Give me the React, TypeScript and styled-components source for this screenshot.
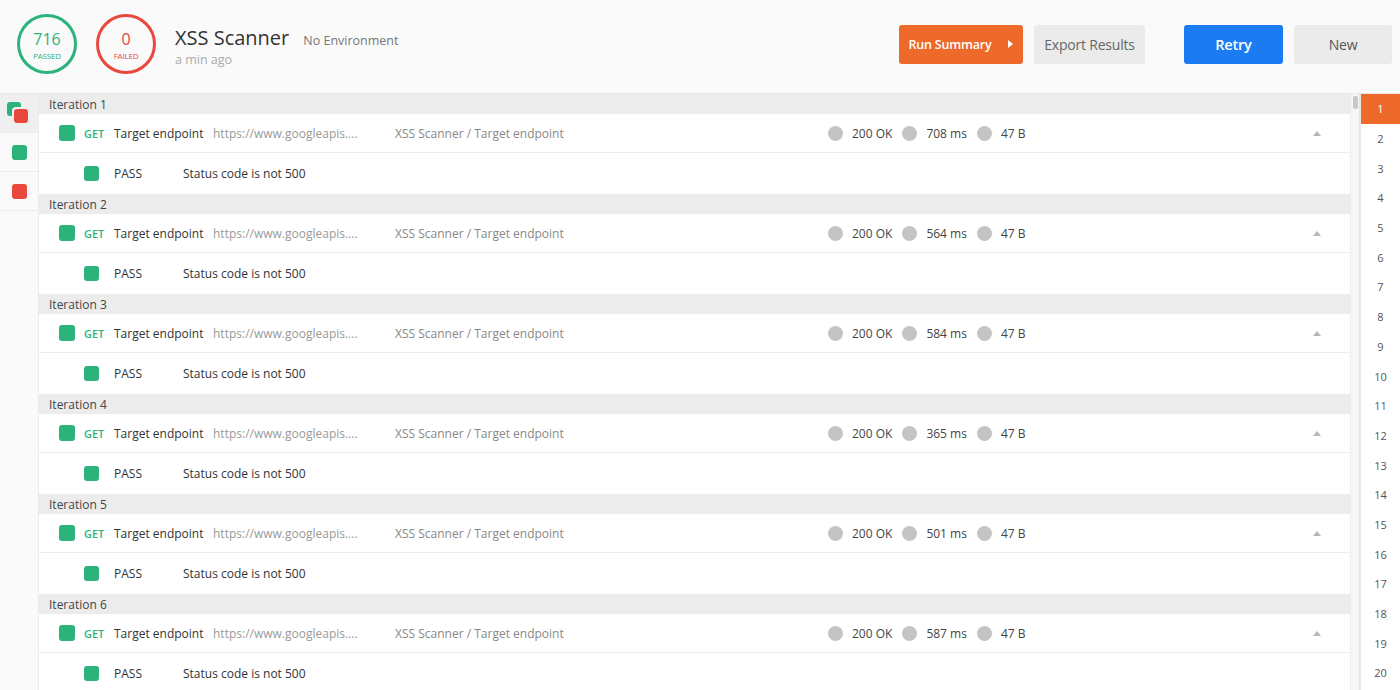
import React from "react";
import styled, { createGlobalStyle } from "styled-components";

const GREEN = "#2bb37b";
const RED = "#e9483d";
const ORANGE = "#ed6a2b";
const BLUE = "#1a7bf2";

const Global = createGlobalStyle`
  html, body { margin: 0; padding: 0; }
  body {
    font-family: "Open Sans", "Noto Sans", sans-serif;
    background: #fafafa;
    color: #333;
    width: 1400px;
    height: 690px;
    overflow: hidden;
  }
`;

const Page = styled.div`
  display: flex;
  flex-direction: column;
  width: 1400px;
  height: 690px;
  overflow: hidden;
`;

const Header = styled.header`
  height: 94px;
  flex: 0 0 94px;
  box-sizing: border-box;
  border-bottom: 1px solid #e8e8e8;
  background: #fafafa;
  display: flex;
  align-items: center;
  padding: 0 8px 5px 17px;
`;

const Ring = styled.div<{ $color: string }>`
  width: 60px;
  height: 60px;
  box-sizing: border-box;
  border-radius: 50%;
  border: 3px solid ${(p) => p.$color};
  color: ${(p) => p.$color};
  display: flex;
  flex-direction: column;
  align-items: center;
  justify-content: center;
  margin-right: 19px;
`;

const RingNum = styled.div`
  font-size: 16px;
  line-height: 18px;
  margin-top: 2px;
`;

const RingLabel = styled.div`
  font-size: 8px;
  line-height: 10px;
  margin-top: 3px;
  letter-spacing: -0.2px;
`;

const TitleBlock = styled.div`
  display: flex;
  flex-direction: column;
  margin-top: 4px;
`;

const TitleLine = styled.div`
  display: flex;
  align-items: baseline;
`;

const Title = styled.div`
  font-size: 20px;
  line-height: 26px;
  color: #333;
`;

const Env = styled.div`
  font-size: 12.5px;
  color: #777;
  margin-left: 14px;
`;

const Ago = styled.div`
  font-size: 12.5px;
  color: #aaa;
`;

const Spacer = styled.div`
  flex: 1;
`;

const Btn = styled.button<{ $bg: string; $fg: string; $w: number; $bold?: boolean; $size?: number }>`
  height: 39px;
  width: ${(p) => p.$w}px;
  border: none;
  border-radius: 3px;
  background: ${(p) => p.$bg};
  color: ${(p) => p.$fg};
  font-family: "Open Sans", sans-serif;
  font-size: ${(p) => p.$size ?? 14}px;
  font-weight: ${(p) => (p.$bold ? 600 : 400)};
  display: flex;
  align-items: center;
  justify-content: center;
  margin-left: 11px;
  padding: 0;
  letter-spacing: -0.2px;
`;

const ButtonGap = styled.div`
  width: 28px;
`;

const Caret = styled.span`
  display: inline-block;
  width: 0;
  height: 0;
  border-top: 4px solid transparent;
  border-bottom: 4px solid transparent;
  border-left: 5px solid #fff;
  margin-left: 17px;
`;

const Body = styled.div`
  flex: 1;
  display: flex;
  min-height: 0;
`;

const Side = styled.div`
  width: 38px;
  flex: 0 0 38px;
  border-right: 1px solid #ececec;
  background: #fafafa;
  display: flex;
  flex-direction: column;
`;

const SideItem = styled.div<{ $active?: boolean }>`
  height: 38px;
  border-bottom: 1px solid #ececec;
  background: ${(p) => (p.$active ? "#efefef" : "#fafafa")};
  display: flex;
  align-items: center;
  justify-content: center;
`;

const Sq = styled.div<{ $color: string; $size?: number }>`
  width: ${(p) => p.$size ?? 15}px;
  height: ${(p) => p.$size ?? 15}px;
  border-radius: 3px;
  background: ${(p) => p.$color};
  flex: 0 0 auto;
`;

const Stack = styled.div`
  position: relative;
  width: 22px;
  height: 22px;
  margin-left: -2px;
  margin-top: -1px;
`;

const StackBack = styled(Sq)`
  position: absolute;
  left: 0;
  top: 0;
`;

const StackFront = styled(Sq)`
  position: absolute;
  left: 7px;
  top: 7px;
  box-shadow: -1px -1px 0 1px #efefef;
`;

const Main = styled.div`
  flex: 1;
  background: #fff;
  overflow: hidden;
  display: flex;
  flex-direction: column;
`;

const IterHead = styled.div`
  height: 20px;
  flex: 0 0 20px;
  background: #ececec;
  font-size: 12px;
  color: #444;
  padding-left: 10px;
  display: flex;
  align-items: center;
`;

const ReqRow = styled.div`
  height: 38px;
  flex: 0 0 38px;
  border-bottom: 1px solid #ececec;
  display: flex;
  align-items: center;
  position: relative;
`;

const Cell = styled.div<{ $left: number; $color?: string; $size?: number; $weight?: number }>`
  position: absolute;
  left: ${(p) => p.$left}px;
  color: ${(p) => p.$color ?? "#333"};
  font-size: ${(p) => p.$size ?? 12}px;
  font-weight: ${(p) => p.$weight ?? 400};
  white-space: nowrap;
  display: flex;
  align-items: center;
`;

const PassRow = styled.div`
  height: 41px;
  flex: 0 0 41px;
  display: flex;
  align-items: center;
  position: relative;
`;

const Dot = styled.span`
  display: inline-block;
  width: 15px;
  height: 15px;
  border-radius: 50%;
  background: #c4c4c4;
  margin-right: 9px;
`;

const Metric = styled.span`
  display: inline-flex;
  align-items: center;
  margin-right: 10px;
  color: #444;
`;

const UpTri = styled.span`
  width: 0;
  height: 0;
  border-left: 4px solid transparent;
  border-right: 4px solid transparent;
  border-bottom: 5px solid #b8b8b8;
`;

const Scroll = styled.div`
  width: 10px;
  flex: 0 0 10px;
  background: #f6f6f6;
  border-left: 1px solid #ececec;
  border-right: 1px solid #e4e4e4;
  box-sizing: border-box;
  display: flex;
  justify-content: center;
  padding-top: 2px;
`;

const Thumb = styled.div`
  width: 5px;
  height: 13px;
  border-radius: 2px;
  background: #c8c8c8;
`;

const Nums = styled.div`
  width: 39px;
  flex: 0 0 39px;
  border-left: 1px solid #e8e8e8;
  background: #fff;
  display: flex;
  flex-direction: column;
`;

const Num = styled.div<{ $active?: boolean }>`
  height: 29.7px;
  flex: 0 0 29.7px;
  display: flex;
  align-items: center;
  justify-content: center;
  font-size: 11px;
  color: ${(p) => (p.$active ? "#fff" : "#555")};
  background: ${(p) => (p.$active ? ORANGE : "transparent")};
`;

const times = ["708", "564", "584", "365", "501", "587"];

export default function App() {
  return (
    <Page>
      <Global />
      <Header>
        <Ring $color={GREEN}>
          <RingNum>716</RingNum>
          <RingLabel>PASSED</RingLabel>
        </Ring>
        <Ring $color={RED}>
          <RingNum>0</RingNum>
          <RingLabel>FAILED</RingLabel>
        </Ring>
        <TitleBlock>
          <TitleLine>
            <Title>XSS Scanner</Title>
            <Env>No Environment</Env>
          </TitleLine>
          <Ago>a min ago</Ago>
        </TitleBlock>
        <Spacer />
        <Btn $bg={ORANGE} $fg="#fff" $w={124} $bold $size={12.5}>
          Run Summary
          <Caret />
        </Btn>
        <Btn $bg="#ebebeb" $fg="#666" $w={111}>
          Export Results
        </Btn>
        <ButtonGap />
        <Btn $bg={BLUE} $fg="#fff" $w={99} $bold $size={14.5}>
          Retry
        </Btn>
        <Btn $bg="#ebebeb" $fg="#555" $w={98}>
          New
        </Btn>
      </Header>
      <Body>
        <Side>
          <SideItem $active>
            <Stack>
              <StackBack $color={GREEN} $size={14} />
              <StackFront $color={RED} $size={14} />
            </Stack>
          </SideItem>
          <SideItem>
            <Sq $color={GREEN} />
          </SideItem>
          <SideItem>
            <Sq $color={RED} />
          </SideItem>
        </Side>
        <Main>
          {times.map((t, i) => (
            <React.Fragment key={i}>
              <IterHead>Iteration {i + 1}</IterHead>
              <ReqRow>
                <Cell $left={20}>
                  <Sq $color={GREEN} $size={16} />
                </Cell>
                <Cell $left={45} $color={GREEN} $size={11} $weight={600}>
                  GET
                </Cell>
                <Cell $left={75}>Target endpoint</Cell>
                <Cell $left={174} $color="#999">
                  https://www.googleapis....
                </Cell>
                <Cell $left={356} $color="#888">
                  XSS Scanner / Target endpoint
                </Cell>
                <Cell $left={789}>
                  <Metric>
                    <Dot />
                    200 OK
                  </Metric>
                  <Metric>
                    <Dot />
                    {t} ms
                  </Metric>
                  <Metric>
                    <Dot />
                    47 B
                  </Metric>
                </Cell>
                <Cell $left={1274}>
                  <UpTri />
                </Cell>
              </ReqRow>
              <PassRow>
                <Cell $left={45}>
                  <Sq $color={GREEN} />
                </Cell>
                <Cell $left={75}>PASS</Cell>
                <Cell $left={144}>Status code is not 500</Cell>
              </PassRow>
            </React.Fragment>
          ))}
        </Main>
        <Scroll>
          <Thumb />
        </Scroll>
        <Nums>
          {Array.from({ length: 20 }, (_, i) => (
            <Num key={i} $active={i === 0}>
              {i + 1}
            </Num>
          ))}
        </Nums>
      </Body>
    </Page>
  );
}
